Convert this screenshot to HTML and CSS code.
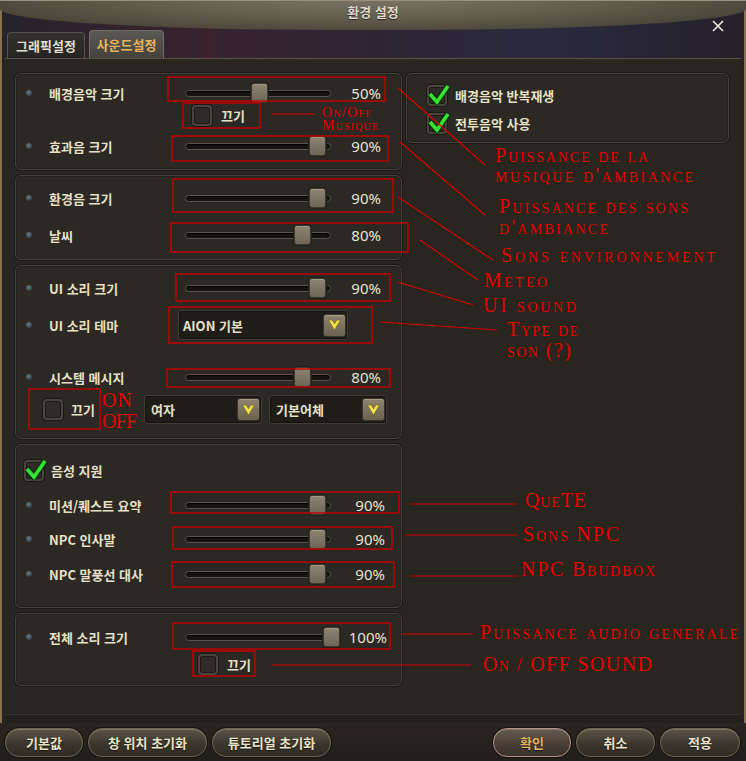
FILE: index.html
```html
<!DOCTYPE html>
<html lang="ko">
<head>
    <meta charset="UTF-8">
    <title>환경 설정</title>
    <link rel="stylesheet" href="styles.css">
</head>
<body>
<div class="window">
    <header class="titlebar">
        <span></span>
        <span class="title">환경 설정</span>
        <span class="close">
            <svg width="12" height="12" viewBox="0 0 12 12"><path d="M1 1 L11 11 M11 1 L1 11" stroke="#eeeade" stroke-width="1.6"/></svg>
        </span>
    </header>

    <nav class="tabs">
        <div class="tab">그래픽설정</div>
        <div class="tab active">사운드설정</div>
    </nav>

    <main class="content">
        <div class="col-left">
            <!-- music / effects -->
            <section class="panel p1">
                <div class="row">
                    <i class="dot"></i><span class="label">배경음악 크기</span>
                    <div class="track"><b class="thumb" style="--v:50"></b></div>
                    <span class="val">50%</span>
                </div>
                <div class="check-row mute-1">
                    <span class="cb"></span><span class="cb-text">끄기</span>
                </div>
                <div class="row r-gap8">
                    <i class="dot"></i><span class="label">효과음 크기</span>
                    <div class="track"><b class="thumb" style="--v:90"></b></div>
                    <span class="val">90%</span>
                </div>
            </section>

            <!-- ambient -->
            <section class="panel p2">
                <div class="row">
                    <i class="dot"></i><span class="label">환경음 크기</span>
                    <div class="track"><b class="thumb" style="--v:90"></b></div>
                    <span class="val">90%</span>
                </div>
                <div class="row r-gap13">
                    <i class="dot"></i><span class="label">날씨</span>
                    <div class="track"><b class="thumb" style="--v:80"></b></div>
                    <span class="val">80%</span>
                </div>
            </section>

            <!-- UI -->
            <section class="panel p3">
                <div class="row">
                    <i class="dot"></i><span class="label">UI 소리 크기</span>
                    <div class="track"><b class="thumb" style="--v:90"></b></div>
                    <span class="val">90%</span>
                </div>
                <div class="row row-select">
                    <i class="dot"></i><span class="label">UI 소리 테마</span>
                    <div class="select theme">
                        <span>AION 기본</span>
                        <span class="arrow"><svg width="13" height="12" viewBox="0 0 13 12"><path d="M0.5 1 L6.5 11 L12.5 1 L8.8 1 L6.5 4.8 L4.2 1 Z" fill="#f4e24c" stroke="#6b5d1c" stroke-width="0.6"/></svg></span>
                    </div>
                </div>
                <div class="row r-gap25">
                    <i class="dot"></i><span class="label">시스템 메시지</span>
                    <div class="track"><b class="thumb" style="--v:80"></b></div>
                    <span class="val">80%</span>
                </div>
                <div class="sys-row">
                    <div class="sys-mute">
                        <span class="cb"></span><span class="cb-text">끄기</span>
                    </div>
                    <div class="select small">
                        <span>여자</span>
                        <span class="arrow"><svg width="13" height="12" viewBox="0 0 13 12"><path d="M0.5 1 L6.5 11 L12.5 1 L8.8 1 L6.5 4.8 L4.2 1 Z" fill="#f4e24c" stroke="#6b5d1c" stroke-width="0.6"/></svg></span>
                    </div>
                    <div class="select small">
                        <span>기본어체</span>
                        <span class="arrow"><svg width="13" height="12" viewBox="0 0 13 12"><path d="M0.5 1 L6.5 11 L12.5 1 L8.8 1 L6.5 4.8 L4.2 1 Z" fill="#f4e24c" stroke="#6b5d1c" stroke-width="0.6"/></svg></span>
                    </div>
                </div>
            </section>

            <!-- voice -->
            <section class="panel p4">
                <div class="check-row voice">
                    <span class="cb checked"><svg width="26" height="26" viewBox="0 0 26 26"><path d="M4 12 L11 20 L22 4" fill="none" stroke="#0c2e0c" stroke-width="6.5" stroke-linejoin="round"/><path d="M4 12 L11 20 L22 4" fill="none" stroke="#33e433" stroke-width="3.6"/></svg></span>
                    <span class="cb-text">음성 지원</span>
                </div>
                <div class="row r-gap12 wide">
                    <i class="dot"></i><span class="label">미션/퀘스트 요약</span>
                    <div class="track"><b class="thumb" style="--v:90"></b></div>
                    <span class="val">90%</span>
                </div>
                <div class="row r-gap10 wide">
                    <i class="dot"></i><span class="label">NPC 인사말</span>
                    <div class="track"><b class="thumb" style="--v:90"></b></div>
                    <span class="val">90%</span>
                </div>
                <div class="row r-gap11 wide">
                    <i class="dot"></i><span class="label">NPC 말풍선 대사</span>
                    <div class="track"><b class="thumb" style="--v:90"></b></div>
                    <span class="val">90%</span>
                </div>
            </section>

            <!-- master -->
            <section class="panel p5">
                <div class="row wider">
                    <i class="dot"></i><span class="label">전체 소리 크기</span>
                    <div class="track"><b class="thumb" style="--v:100"></b></div>
                    <span class="val">100%</span>
                </div>
                <div class="check-row mute-all">
                    <span class="cb"></span><span class="cb-text">끄기</span>
                </div>
            </section>
        </div>

        <div class="col-right">
            <section class="panel options">
                <div class="check-row">
                    <span class="cb checked"><svg width="26" height="26" viewBox="0 0 26 26"><path d="M4 12 L11 20 L22 4" fill="none" stroke="#0c2e0c" stroke-width="6.5" stroke-linejoin="round"/><path d="M4 12 L11 20 L22 4" fill="none" stroke="#33e433" stroke-width="3.6"/></svg></span>
                    <span class="cb-text">배경음악 반복재생</span>
                </div>
                <div class="check-row r-gap7">
                    <span class="cb checked"><svg width="26" height="26" viewBox="0 0 26 26"><path d="M4 12 L11 20 L22 4" fill="none" stroke="#0c2e0c" stroke-width="6.5" stroke-linejoin="round"/><path d="M4 12 L11 20 L22 4" fill="none" stroke="#33e433" stroke-width="3.6"/></svg></span>
                    <span class="cb-text">전투음악 사용</span>
                </div>
            </section>
        </div>
    </main>

    <footer class="buttons">
        <span class="btn w78">기본값</span>
        <span class="btn w119">창 위치 초기화</span>
        <span class="btn w119">튜토리얼 초기화</span>
        <span class="spacer"></span>
        <span class="btn ok w78">확인</span>
        <span class="btn w79">취소</span>
        <span class="btn w80">적용</span>
    </footer>

    <!-- red notes drawn over the screenshot -->
    <svg class="notes" width="746" height="761" viewBox="0 0 746 761">
        <g class="boxes">
            <rect x="168" y="77" width="217" height="24"/>
            <rect x="183" y="103" width="77" height="25"/>
            <rect x="172" y="136" width="216" height="25"/>
            <rect x="173" y="179" width="220" height="33"/>
            <rect x="171" y="223" width="237" height="29"/>
            <rect x="176" y="274" width="214" height="27"/>
            <rect x="169" y="307" width="203" height="36"/>
            <rect x="167" y="369" width="223" height="18"/>
            <rect x="29" y="389" width="71" height="40"/>
            <rect x="171" y="492" width="228" height="21"/>
            <rect x="173" y="527" width="219" height="22"/>
            <rect x="172" y="562" width="222" height="25"/>
            <rect x="173" y="623" width="217" height="26"/>
            <rect x="193" y="651" width="62" height="25"/>
        </g>
        <g class="leads">
            <line x1="272" y1="114" x2="315" y2="114"/>
            <line x1="398" y1="88" x2="485" y2="165"/>
            <line x1="400" y1="142" x2="485" y2="215"/>
            <line x1="398" y1="197" x2="493" y2="260"/>
            <line x1="420" y1="240" x2="478" y2="280"/>
            <line x1="398" y1="282" x2="473" y2="305"/>
            <line x1="380" y1="322" x2="497" y2="330"/>
            <line x1="410" y1="504" x2="517" y2="504"/>
            <line x1="405" y1="535" x2="517" y2="535"/>
            <line x1="410" y1="576" x2="518" y2="576"/>
            <line x1="402" y1="634" x2="473" y2="634"/>
            <line x1="272" y1="665" x2="471" y2="665"/>
        </g>
        <g class="note-text">
            <text x="495" y="162" textLength="153" lengthAdjust="spacing">Puissance de la</text>
            <text x="495" y="182" textLength="198" lengthAdjust="spacing">musique d'ambiance</text>
            <text x="499" y="213" textLength="189" lengthAdjust="spacing">Puissance des sons</text>
            <text x="499" y="234" textLength="109" lengthAdjust="spacing">d'ambiance</text>
            <text x="501" y="262" textLength="214" lengthAdjust="spacing">Sons environnement</text>
            <text x="484" y="287" textLength="63" lengthAdjust="spacing">Meteo</text>
            <text x="483" y="312" textLength="93" lengthAdjust="spacing">UI sound</text>
            <text x="507" y="336" textLength="71" lengthAdjust="spacing">Type de</text>
            <text x="507" y="357" textLength="64" lengthAdjust="spacing">son (?)</text>
            <text x="525" y="507" textLength="61" lengthAdjust="spacing">QueTE</text>
            <text x="523" y="541" textLength="96" lengthAdjust="spacing">Sons NPC</text>
            <text x="521" y="576" textLength="134" lengthAdjust="spacing">NPC Bbudbox</text>
            <text x="480" y="639" textLength="258" lengthAdjust="spacing">Puissance audio generale</text>
            <text x="483" y="671" textLength="169" lengthAdjust="spacing">On / OFF SOUND</text>
            <text x="102" y="407" textLength="30" lengthAdjust="spacing">ON</text>
            <text x="102" y="428" textLength="35" lengthAdjust="spacing">OFF</text>
            <text class="tiny" x="322" y="117" textLength="49" lengthAdjust="spacing">On/Off</text>
            <text class="tiny" x="322" y="130" textLength="56" lengthAdjust="spacing">Musique</text>
        </g>
    </svg>
</div>
</body>
</html>
```

FILE: styles.css
```css
* {
    box-sizing: border-box;
}

body {
    margin: 0;
    width: 746px;
    height: 761px;
    overflow: hidden;
    background: #1d1a1e;
    font-family: "Noto Sans CJK KR", "Noto Sans", sans-serif;
    color: #e6e1c6;
}

.window {
    position: relative;
    width: 746px;
    height: 761px;
    display: flex;
    flex-direction: column;
    background: linear-gradient(90deg, #27222a 0%, #38232f 28%, #2d2533 52%, #2a2a3f 72%, #25212a 100%);
    box-shadow: inset 2px 0 0 #86734e, inset -2px 0 0 #86734e, inset 0 -2px 0 #7a6a52;
}

/* title bar */
.titlebar {
    height: 30px;
    display: grid;
    grid-template-columns: 1fr auto 1fr;
    background: radial-gradient(70% 140% at 50% 0%, #7a7463 0%, #625c4d 45%, #4d483c 75%, #3a3532 100%);
    border-radius: 0 0 45% 45% / 0 0 70% 70%;
    box-shadow: inset 0 1px 0 #9a927c;
}

.title {
    font-size: 13px;
    font-weight: bold;
    color: #dedac8;
    line-height: 13px;
    padding-top: 5px;
    text-shadow: 0 1px 1px #2a2620;
}

.close {
    justify-self: end;
    margin: 13px 22px 0 0;
    height: 12px;
}

/* tabs */
.tabs {
    height: 28px;
    display: flex;
    align-items: flex-end;
    gap: 4px;
    padding-left: 7px;
}

.tab {
    width: 78px;
    height: 26px;
    line-height: 25px;
    text-align: center;
    font-size: 13px;
    font-weight: bold;
    color: #e2decd;
    background: linear-gradient(#34312d, #262421);
    border: 1px solid #57534b;
    border-bottom: none;
    border-radius: 4px 4px 0 0;
}

.tab.active {
    width: 75px;
    height: 28px;
    line-height: 28px;
    color: #e9b55a;
    background: linear-gradient(#5a5953, #43423d);
    border-color: #6f6d64;
}

/* main area */
.content {
    height: 665px;
    margin: 0 5px;
    padding: 14px 0 0 10px;
    display: grid;
    grid-template-columns: 387px 323px;
    column-gap: 4px;
    align-items: start;
    background: #29251f;
    border-top: 1px solid #5c5241;
    box-shadow: inset 0 -8px 0 #24201c, inset 0 -9px 0 #3a342b;
}

.col-left {
    display: flex;
    flex-direction: column;
    gap: 5px;
}

.panel {
    border: 1px solid #48433a;
    border-radius: 6px;
    background: #2c2823;
    box-shadow: 0 0 0 1px #1c1916, inset 0 0 0 1px #24211d;
    padding-left: 10px;
    display: flex;
    flex-direction: column;
}

.p1 { height: 97px; padding-top: 7px; }
.p2 { height: 85px; padding-top: 10px; }
.p3 { height: 174px; padding-top: 10px; }
.p4 { height: 164px; padding-top: 14px; }
.p5 { height: 73px; padding-top: 11px; }

.options {
    height: 70px;
    padding: 11px 0 0 20px;
}

.r-gap7 { margin-top: 7px; }
.r-gap8 { margin-top: 8px; }
.r-gap10 { margin-top: 10px; }
.r-gap11 { margin-top: 11px; }
.r-gap12 { margin-top: 12px; }
.r-gap13 { margin-top: 13px; }
.r-gap25 { margin-top: 25px; }

/* slider rows */
.row {
    display: flex;
    align-items: center;
    height: 24px;
}

.dot {
    width: 6px;
    height: 6px;
    border-radius: 50%;
    margin-right: 17px;
    background: radial-gradient(circle at 40% 35%, #6a7d84, #334247 70%);
}

.label {
    width: 136px;
    font-size: 13px;
    font-weight: bold;
    white-space: nowrap;
}

.track {
    position: relative;
    width: 146px;
    height: 7px;
    border-radius: 4px;
    background: #15130f;
    border: 1px solid #5a554b;
    box-shadow: inset 0 1px 1px #000;
}

.thumb {
    position: absolute;
    top: 50%;
    margin-top: -10px;
    left: calc(var(--v) * 1.44px - 7px);
    width: 17px;
    height: 20px;
    border-radius: 3px;
    background: linear-gradient(#8d8473, #6d6556);
    border: 1px solid #3e392f;
    box-shadow: 0 0 0 1px #23201b, inset 0 1px 0 #a39a86;
}

.val {
    width: 50px;
    text-align: right;
    font-family: "Noto Sans", sans-serif;
    font-size: 15px;
    color: #e8e3cb;
}

.wide .val { width: 54px; }
.wider .val { width: 56px; }

/* checkboxes */
.check-row {
    display: flex;
    align-items: center;
    height: 21px;
}

.cb {
    position: relative;
    flex: none;
    width: 20px;
    height: 21px;
    border-radius: 4px;
    background: #2f2c27;
    border: 2px solid #4b463b;
    box-shadow: 0 0 0 1px #1a1815, inset 0 0 0 1px #1b1916;
}

.cb svg {
    position: absolute;
    left: -3px;
    top: -5px;
}

.cb-text {
    margin-left: 9px;
    font-size: 13px;
    font-weight: bold;
}

.mute-1 { margin-left: 166px; }
.mute-all { margin-top: 6px; margin-left: 172px; height: 19px; }
.voice { height: 22px; margin-left: -2px; }
.voice .cb-text { margin-left: 7px; }
.options .cb-text { margin-left: 8px; }

/* drop-downs */
.row-select {
    height: 30px;
    margin-top: 10px;
}

.select {
    display: flex;
    align-items: center;
    justify-content: space-between;
    height: 30px;
    padding: 0 1px 0 4px;
    font-size: 13px;
    font-weight: bold;
    background: #201d19;
    border: 1px solid #423d34;
    border-radius: 3px;
    box-shadow: inset 0 0 0 1px #161410;
}

.theme {
    width: 170px;
    margin-left: -7px;
}

.arrow {
    width: 23px;
    height: 23px;
    display: flex;
    align-items: center;
    justify-content: center;
    border-radius: 3px;
    background: linear-gradient(#8e846f, #6a614f);
    border: 1px solid #3a352c;
    box-shadow: inset 0 1px 0 #a89e86;
}

.sys-row {
    display: flex;
    align-items: center;
    gap: 7px;
    margin-top: 6px;
    height: 29px;
}

.sys-mute {
    width: 111px;
    display: flex;
    align-items: center;
    padding-left: 17px;
}

.sys-mute .cb-text { margin-left: 8px; }

.select.small {
    width: 118px;
    height: 29px;
    padding-left: 6px;
}

/* bottom buttons */
.buttons {
    flex: 1;
    display: flex;
    align-items: flex-start;
    gap: 5px;
    padding: 5px 6px 0 5px;
    background: linear-gradient(#2a2520, #221e1a);
}

.spacer { flex: 1; }

.btn {
    height: 29px;
    line-height: 27px;
    text-align: center;
    font-size: 13px;
    font-weight: bold;
    color: #e8e2c8;
    border-radius: 14px;
    border: 1px solid #6d6451;
    background: linear-gradient(#5b5547, #3b362d 55%, #2f2b24);
    box-shadow: 0 0 0 1px #161310, inset 0 1px 0 #7f7764;
    text-shadow: 0 1px 1px #1a1713;
}

.btn.ok {
    color: #e6b465;
    border-color: #b58d86;
    background: linear-gradient(#695a50, #4a3f37 55%, #3a312b);
}

.w78 { width: 78px; }
.w79 { width: 79px; }
.w80 { width: 80px; }
.w119 { width: 119px; }

/* red annotations over the window */
.notes {
    position: absolute;
    top: 0;
    left: 0;
    pointer-events: none;
}

.boxes rect {
    fill: none;
    stroke: #c90000;
    stroke-width: 1.4;
}

.leads line {
    stroke: #d80000;
    stroke-width: 1.2;
}

.note-text text {
    fill: #e60000;
    font-family: "Liberation Serif", serif;
    font-size: 20px;
    font-variant: small-caps;
}

.note-text .tiny {
    font-size: 14px;
}
```
